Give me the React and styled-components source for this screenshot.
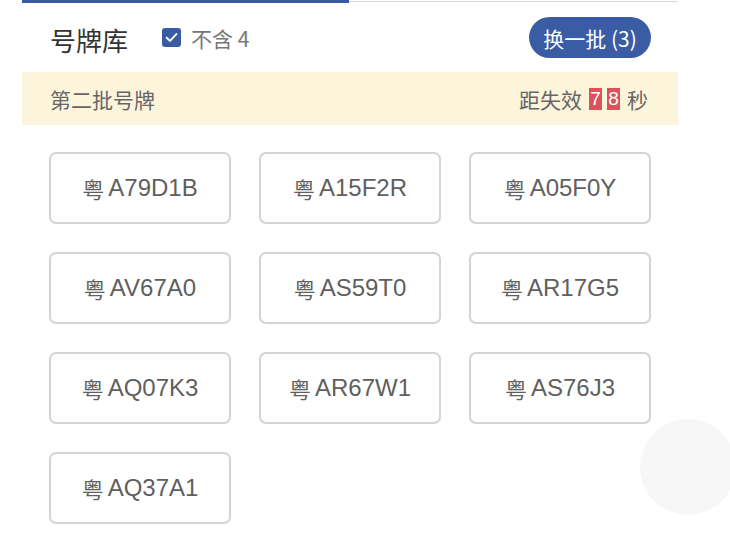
import styled, { createGlobalStyle } from "styled-components";

const GlobalStyle = createGlobalStyle`
  body {
    margin: 0;
    background: #ffffff;
    font-family: "Liberation Sans", "Noto Sans CJK SC", sans-serif;
  }
`;

const cjk = `"Noto Sans CJK SC", sans-serif`;

const Page = styled.div`
  position: relative;
  width: 730px;
  height: 538px;
  overflow: hidden;
  padding: 0 52px 0 22px;
  box-sizing: border-box;
`;

const Tabs = styled.div`
  display: flex;
  align-items: flex-start;
  height: 3px;
`;

const TabLine = styled.div`
  flex: ${(p) => (p.active ? "0 0 327px" : "1")};
  height: ${(p) => (p.active ? "3px" : "1px")};
  margin-top: ${(p) => (p.active ? "0" : "1px")};
  background: ${(p) => (p.active ? "#3a5ba3" : "#d8d8d8")};
`;

const Header = styled.div`
  display: flex;
  align-items: center;
  height: 69px;
  padding: 0 27px 0 28px;
`;

const Title = styled.div`
  font-size: 26px;
  color: #333;
  font-family: ${cjk};
  margin: 4px 34px 0 0;
`;

const Check = styled.label`
  display: flex;
  align-items: center;
  gap: 10px;
  font-size: 21px;
  color: #777;
  flex: 1;
`;

const Box = styled.span`
  width: 19px;
  height: 19px;
  border-radius: 3px;
  background: #3a5ba3;
  display: flex;
  align-items: center;
  justify-content: center;
`;

const CheckText = styled.span`
  font-family: ${cjk};
`;

const Refresh = styled.button`
  height: 41px;
  width: 122px;
  border: none;
  border-radius: 21px;
  background: #3a5ca5;
  color: #fff;
  font-size: 21px;
  font-family: ${cjk};
  padding: 0;
`;

const Band = styled.div`
  display: flex;
  align-items: center;
  justify-content: space-between;
  height: 53px;
  padding: 0 30px 0 28px;
  background: #fdf4dc;
  font-size: 21px;
  color: #666;
  font-family: ${cjk};
`;

const Timer = styled.div`
  display: flex;
  align-items: center;
  gap: 5px;
`;

const Digit = styled.span`
  display: inline-flex;
  align-items: center;
  justify-content: center;
  width: 13px;
  height: 22px;
  background: #d9525c;
  color: #fff;
  font-size: 19px;
  font-family: "Liberation Sans", sans-serif;
  margin-left: ${(p) => (p.first ? "2px" : "0")};
`;

const Unit = styled.span`
  margin-left: 2px;
`;

const Grid = styled.div`
  display: grid;
  grid-template-columns: repeat(3, 182px);
  grid-auto-rows: 72px;
  gap: 28px;
  padding: 27px 0 0 27px;
`;

const Plate = styled.div`
  display: flex;
  align-items: center;
  justify-content: center;
  gap: 4px;
  border: 2px solid #d4d4d4;
  border-radius: 7px;
  box-sizing: border-box;
  font-size: 24px;
  color: #5f5f5f;
`;

const Province = styled.span`
  font-family: ${cjk};
  font-size: 22px;
`;

const Float = styled.div`
  position: absolute;
  left: 640px;
  top: 419px;
  width: 96px;
  height: 96px;
  border-radius: 50%;
  background: #f7f7f7;
`;

const plates = [
  "A79D1B", "A15F2R", "A05F0Y",
  "AV67A0", "AS59T0", "AR17G5",
  "AQ07K3", "AR67W1", "AS76J3",
  "AQ37A1",
];

export default function App() {
  return (
    <Page>
      <GlobalStyle />
      <Tabs>
        <TabLine active />
        <TabLine />
      </Tabs>
      <Header>
        <Title>号牌库</Title>
        <Check>
          <Box>
            <svg width="15" height="15" viewBox="0 0 14 14">
              <path d="M2.5 7.2 L5.6 10.2 L11.6 3.8" fill="none" stroke="#fff" strokeWidth="1.8" strokeLinecap="round" strokeLinejoin="round" />
            </svg>
          </Box>
          <CheckText>不含 4</CheckText>
        </Check>
        <Refresh>换一批 (3)</Refresh>
      </Header>
      <Band>
        <span>第二批号牌</span>
        <Timer>
          <span>距失效</span>
          <Digit first>7</Digit>
          <Digit>8</Digit>
          <Unit>秒</Unit>
        </Timer>
      </Band>
      <Grid>
        {plates.map((p) => (
          <Plate key={p}>
            <Province>粤</Province>
            <span>{p}</span>
          </Plate>
        ))}
      </Grid>
      <Float />
    </Page>
  );
}
